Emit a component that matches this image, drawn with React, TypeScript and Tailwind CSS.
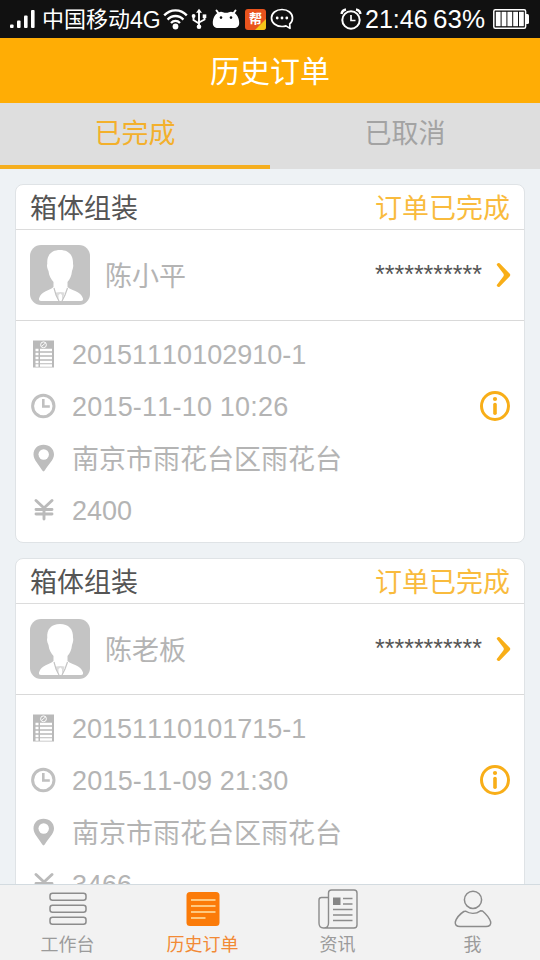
import React from 'react';

interface Order {
  id: string;
  title: string;
  status: string;
  name: string;
  phone: string;
  time: string;
  address: string;
  price: string;
}

const orders: Order[] = [
  {
    id: '20151110102910-1',
    title: '箱体组装',
    status: '订单已完成',
    name: '陈小平',
    phone: '***********',
    time: '2015-11-10 10:26',
    address: '南京市雨花台区雨花台',
    price: '2400',
  },
  {
    id: '20151110101715-1',
    title: '箱体组装',
    status: '订单已完成',
    name: '陈老板',
    phone: '***********',
    time: '2015-11-09 21:30',
    address: '南京市雨花台区雨花台',
    price: '3466',
  },
];

const StatusBar: React.FC = () => (
  <div className="flex h-[38px] shrink-0 items-center justify-between bg-[#111] pl-[10px] pr-[10px] text-white">
    <div className="flex items-center">
      <svg width="25" height="20" viewBox="0 0 25 20" fill="#fff">
        <rect x="0" y="15.5" width="3.6" height="3.5" rx="1" />
        <rect x="7" y="11.5" width="3.6" height="7.5" rx="1" />
        <rect x="14" y="6.5" width="3.6" height="12.5" rx="1" />
        <rect x="21" y="1" width="3.6" height="18" rx="1" />
      </svg>
      <span className="ml-[7px] flex w-[120px] items-center whitespace-nowrap pt-px text-[22px] leading-[38px]">
        中国移动<span className="text-[23px]">4G</span>
      </span>
      <svg className="ml-[1px]" width="25" height="22" viewBox="0 0 25 22" fill="none" stroke="#fff" strokeWidth="2.3">
        <path d="M1.2 7.4C7.5 0.6 17.5 0.6 23.8 7.4" />
        <path d="M4.6 11.6C9 6.8 16 6.8 20.4 11.6" />
        <path d="M8 15C10.6 12.2 14.4 12.2 17 15" />
        <circle cx="12.5" cy="18.5" r="2.9" fill="#fff" stroke="none" />
      </svg>
      <svg className="ml-[3px]" width="16" height="22" viewBox="0 0 16 22" fill="none" stroke="#fff" strokeWidth="1.9">
        <path d="M8 3V18M2.5 8V12L8 15.5M13.5 8V11.5L8 14.5" />
        <path d="M8 0.8L11 4.8H5Z" fill="#fff" stroke="none" />
        <circle cx="2.6" cy="8" r="1.9" fill="#fff" stroke="none" />
        <rect x="11.7" y="6.4" width="3.6" height="3.6" fill="#fff" stroke="none" />
        <circle cx="8" cy="18.8" r="2.3" fill="#fff" stroke="none" />
      </svg>
      <svg className="ml-[5px]" width="28" height="20" viewBox="0 0 28 20" fill="#fff">
        <path d="M4.5 1.5L7 5M23.5 1.5L21 5" stroke="#fff" strokeWidth="2" strokeLinecap="round" />
        <path d="M0.8 14C0.8 9 3 5 6.5 3.5Q9 2.3 11 3.3Q14 4.3 17 3.3Q19 2.3 21.5 3.5C25 5 27.2 9 27.2 14C27.2 17.5 25 19 22 19H6C3 19 0.8 17.5 0.8 14Z" />
        <circle cx="9" cy="8.6" r="1.3" fill="#111" />
        <circle cx="19" cy="8.6" r="1.3" fill="#111" />
      </svg>
      <div className="relative ml-[5px] h-[21px] w-[21px] overflow-hidden rounded-[3px] bg-[#e9531d] text-center text-[13px] font-bold leading-[20px]">
        <svg className="absolute bottom-0 right-0" width="11" height="11" viewBox="0 0 11 11">
          <path d="M11 0V11H0Z" fill="#f5c518" />
        </svg>
        <span className="relative">帮</span>
      </div>
      <svg className="ml-[4px]" width="24" height="22" viewBox="0 0 24 22" fill="none" stroke="#fff" strokeWidth="1.7">
        <path d="M12 1.5C5.8 1.5 1.5 5.3 1.5 10S5.8 18.5 12 18.5C13.5 18.5 14.8 18.3 16 17.9L20 20.4L19.7 16C21.5 14.5 22.5 12.4 22.5 10C22.5 5.3 18.2 1.5 12 1.5Z" strokeLinejoin="round" />
        <g fill="#fff" stroke="none">
          <circle cx="7.2" cy="10" r="1.4" />
          <circle cx="12" cy="10" r="1.4" />
          <circle cx="16.8" cy="10" r="1.4" />
        </g>
      </svg>
    </div>
    <div className="flex items-center">
      <svg width="22" height="22" viewBox="0 0 22 22" fill="none" stroke="#fff" strokeWidth="2">
        <circle cx="11" cy="12" r="8.7" />
        <path d="M11 7V12.5H15.5" strokeWidth="1.7" />
        <path d="M1.5 6Q2 2.2 6 1.5M20.5 6Q20 2.2 16 1.5" strokeWidth="2.4" />
      </svg>
      <span className="ml-[3px] w-[68px] text-[25px] leading-[38px]">21:46</span>
      <span className="w-[56px] text-[26px] leading-[38px]">63%</span>
      <svg className="ml-[4px]" width="37" height="20" viewBox="0 0 37 20" fill="#fff">
        <rect x="0.8" y="0.8" width="31.8" height="18.4" rx="1.5" fill="none" stroke="#fff" strokeWidth="1.5" />
        <rect x="2.8" y="2.8" width="4.8" height="14.4" />
        <rect x="8.6" y="2.8" width="4.8" height="14.4" />
        <rect x="14.4" y="2.8" width="4.8" height="14.4" />
        <rect x="20.2" y="2.8" width="4.8" height="14.4" />
        <rect x="26" y="2.8" width="4.8" height="14.4" />
        <path d="M33 5H34.5Q36 5 36 6.5V13.5Q36 15 34.5 15H33Z" />
      </svg>
    </div>
  </div>
);

const Avatar: React.FC = () => (
  <svg width="60" height="60" viewBox="0 0 60 60">
    <rect width="60" height="60" rx="11" fill="#c4c4c4" />
    <path d="M30 5C38.5 5 43.5 10 43 19C43.5 20 43.3 23 42 26C41.5 31 40 34 37.5 37V42C41 45.5 51 46 53 53.5Q53.5 56 51 56H11Q8.5 56 9 53.5C11 46 20 45.5 23.5 42V37C21 34 19 31 18.5 26C17 23 16.7 20 17.3 19C16.5 10 21.5 5 30 5Z" fill="#fff" />
    <path d="M24 43L26 50L29 56M37.5 43L35 50L32 56" fill="none" stroke="#c4c4c4" strokeWidth="1.2" />
    <path d="M26 47.5L30.500 47L34.5 47.500L34 50L32 55V50L30.5 48.500L28.5 50V54L26 50Z" fill="#c4c4c4" opacity="0.6" />
  </svg>
);

const ListIcon = () => (
  <svg width="26" height="28" viewBox="0 0 26 28">
    <rect x="3" y="0.5" width="21" height="27" fill="#b9b9b9" />
    <path d="M5.5 10H8.5M10 10H22M5.5 14H8.5M10 14H22M5.5 18H8.5M10 18H22M5.5 22H8.5M10 22H22M5.5 25.5H8.5M10 25.5H22" stroke="#fff" strokeWidth="2.3" />
    <circle cx="13.5" cy="4.8" r="2.9" fill="none" stroke="#fff" strokeWidth="1" />
    <path d="M11.8 6.2L16 2.5" stroke="#fff" strokeWidth="0.9" />
  </svg>
);

const ClockIcon = () => (
  <svg width="26" height="26" viewBox="0 0 26 26" fill="none" stroke="#c0c0c0">
    <circle cx="13.3" cy="13" r="10.7" strokeWidth="3" />
    <path d="M13.3 6V13.5H19.8" strokeWidth="2.6" />
  </svg>
);

const PinIcon = () => (
  <svg width="26" height="28" viewBox="0 0 26 28">
    <path d="M13.5 0.8C7.5 0.8 3.5 5 3.5 10.5C3.5 16 9 20.5 12.1 26.3Q13.5 28.5 14.9 26.3C18 20.5 24 16 24 10.5C24 5 19.5 0.8 13.5 0.8Z" fill="#bdbdbd" />
    <circle cx="13.7" cy="10.5" r="5.2" fill="#fff" />
  </svg>
);

const YenIcon = () => (
  <svg width="26" height="24" viewBox="0 0 26 24" fill="none" stroke="#bababa" strokeWidth="2.9" strokeLinecap="round">
    <path d="M6 2.5L14 10L22 2.5M14 10.500V21M6 11.5H22M6 16H22" />
  </svg>
);

const InfoIcon = () => (
  <svg width="30" height="30" viewBox="0 0 30 30" fill="none" stroke="#f8ae18">
    <circle cx="15" cy="15" r="13.5" strokeWidth="3" />
    <path d="M15 13.5V22.3" strokeWidth="3.6" strokeLinecap="round" />
    <circle cx="15" cy="8" r="2.1" fill="#f8ae18" stroke="none" />
  </svg>
);

const DetailRow: React.FC<{ icon: React.ReactNode; className?: string; children: React.ReactNode }> = ({
  icon,
  className = 'pt-[2px]',
  children,
}) => (
  <div className="flex h-[52px] items-center">
    <div className="flex w-[26px] items-center justify-center">{icon}</div>
    <span className={`ml-[16px] whitespace-nowrap leading-[48px] [font-kerning:none] ${className}`}>{children}</span>
  </div>
);

const OrderCard: React.FC<{ order: Order }> = ({ order }) => (
  <div className="h-[359px] shrink-0 rounded-[8px] border border-[#dfe3e6] bg-white text-[27px] text-[#b4b4b4]">
    <div className="flex h-[45px] items-center justify-between border-b border-[#dcdcdc] pl-[14px] pr-[14px] pt-[4px] leading-[40px]">
      <span className="text-[#555]">{order.title}</span>
      <span className="text-[#f9bb3d]">{order.status}</span>
    </div>
    <div className="flex h-[91px] items-center border-b border-[#d9d9d9] pl-[14px] pr-[13px]">
      <Avatar />
      <span className="ml-[15px] pt-[4px]">{order.name}</span>
      <span className="ml-auto text-[25px] text-[#555]">{order.phone}</span>
      <svg className="ml-[14px]" width="15" height="26" viewBox="0 0 15 26" fill="#f8ae18">
        <path d="M0.6 2.8Q1.5 0.2 3.6 1.3L13.8 11.8Q14.7 13 13.8 14.2L3.6 24.7Q1.5 25.8 0.6 23.2L7.3 14.5Q8.3 13 7.3 11.5Z" />
      </svg>
    </div>
    <div className="flex items-center justify-between pl-[14px] pr-[14px] pt-[7px]">
      <div>
        <DetailRow icon={<ListIcon />}>{order.id}</DetailRow>
        <DetailRow icon={<ClockIcon />} className="pt-[2px] tracking-[0.2px]">{order.time}</DetailRow>
        <DetailRow icon={<PinIcon />} className="pt-[3px]">{order.address}</DetailRow>
        <DetailRow icon={<YenIcon />}>{order.price}</DetailRow>
      </div>
      <div className="mb-[52px]">
        <InfoIcon />
      </div>
    </div>
  </div>
);

const navItems = [
  {
    label: '工作台',
    active: false,
    icon: (
      <svg width="38" height="34" viewBox="0 0 38 34" fill="none" stroke="#8c8c8c" strokeWidth="1.5">
        <rect x="1" y="1.2" width="36" height="7" rx="2.5" />
        <rect x="1" y="13.2" width="36" height="7" rx="2.5" />
        <rect x="1" y="25.2" width="36" height="7" rx="2.5" />
      </svg>
    ),
  },
  {
    label: '历史订单',
    active: true,
    icon: (
      <svg width="34" height="34" viewBox="0 0 34 34">
        <rect x="0.5" width="33" height="34" rx="3.5" fill="#fb7b09" />
        <path d="M5 8H29.5M5 14H29.5M5 20H29.5M5 26H19.5" stroke="#ffe3a8" strokeWidth="1.6" />
      </svg>
    ),
  },
  {
    label: '资讯',
    active: false,
    icon: (
      <svg width="40" height="40" viewBox="0 0 40 40" fill="none" stroke="#8c8c8c" strokeWidth="1.4">
        <path d="M10.5 34V4Q10.5 1 13.5 1H36Q39 1 39 4V36Q39 39 36 39H5.5Q1 39 1 34V11Q1 8.5 3.5 8.5H10.5M10.5 34Q10.5 39 6 39" />
        <rect x="15" y="8.5" width="7.5" height="7.5" fill="#858585" stroke="none" />
        <path d="M25 9.5H34.5M25 15H34.5M15 20.5H34.5M15 26H34.5M15 31.5H34.5" />
      </svg>
    ),
  },
  {
    label: '我',
    active: false,
    icon: (
      <svg width="38" height="38" viewBox="0 0 38 38" fill="none" stroke="#8c8c8c" strokeWidth="1.5">
        <circle cx="19" cy="9.8" r="8.6" />
        <path d="M9.8 21.5C6 24 2.5 28 1.3 32Q0.8 36.5 6 36.5H32Q37.2 36.5 36.7 32C35.5 28 32 24 28.5 21L26.5 20.8C22 24 16 24 11.5 21.2Z" strokeLinejoin="round" />
      </svg>
    ),
  },
];

const BottomNav: React.FC = () => (
  <div className="flex h-[76px] shrink-0 border-t border-[#d3dbe0] bg-[#f2f2f2] text-[18px]">
    {navItems.map((item) => (
      <div key={item.label} className="flex flex-1 flex-col items-center">
        <div className="flex h-[48px] items-center justify-center">{item.icon}</div>
        <span className={`pt-px leading-[22px] ${item.active ? 'text-[#f28a35]' : 'text-[#9b9b9b]'}`}>{item.label}</span>
      </div>
    ))}
  </div>
);

export default function App() {
  return (
    <div className="flex h-[960px] w-[540px] flex-col overflow-hidden bg-[#eef2f5] font-['Liberation_Sans','Noto_Sans_CJK_SC',sans-serif]">
      <StatusBar />
      <div className="flex h-[65px] shrink-0 items-center justify-center bg-[#ffad05] pt-[2px] text-[30px] leading-[63px] text-white">
        历史订单
      </div>
      <div className="flex h-[66px] shrink-0 bg-[#dedede] text-center text-[27px] leading-[63px]">
        <div className="flex-1 border-b-4 border-[#f5ae1e] text-[#f3b02c]">已完成</div>
        <div className="flex-1 text-[#a3a3a3]">已取消</div>
      </div>
      <div className="flex min-h-0 flex-1 flex-col gap-[15px] overflow-hidden px-[15px] pt-[15px]">
        {orders.map((order) => (
          <OrderCard key={order.id} order={order} />
        ))}
      </div>
      <BottomNav />
    </div>
  );
}
